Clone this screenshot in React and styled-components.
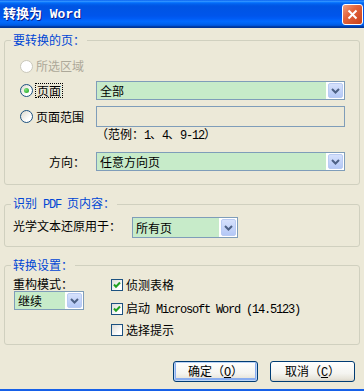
import React from 'react';
import styled, { createGlobalStyle } from 'styled-components';

const GlobalStyle = createGlobalStyle`
  body {
    margin: 0;
    font-family: "Noto Sans CJK SC", "Liberation Sans", sans-serif;
    font-size: 12px;
    color: #000;
  }
`

const Window = styled.div`
  width: 364px;
  height: 391px;
  display: flex;
  flex-direction: column;
  background: #ece9d8;
  overflow: hidden;
`

const TitleBar = styled.div`
  height: 28px;
  flex: none;
  display: flex;
  align-items: center;
  justify-content: space-between;
  padding: 0 1px 0 3px;
  background: linear-gradient(
    to bottom,
    #0058ee 0%, #3593ff 4%, #288eff 6%, #127dff 8%, #036ffc 10%,
    #0262ee 14%, #0057e5 20%, #0054e3 24%, #0055eb 56%, #005bf5 66%,
    #026afe 76%, #0062ef 86%, #0052d6 92%, #0040ab 94%, #003092 100%
  );
`

const Title = styled.div`
  color: #fff;
  font-weight: bold;
  font-size: 13px;
  line-height: 16px;
  text-shadow: 1px 1px 0 #0a1e8c;
`

const CloseButton = styled.div`
  width: 21px;
  height: 21px;
  box-sizing: border-box;
  border: 1px solid #fff;
  border-radius: 3px;
  background: linear-gradient(135deg, #f0a080 0%, #e3643c 40%, #c8401a 100%);
  display: flex;
  align-items: center;
  justify-content: center;
`

const Body = styled.div`
  flex: 1;
  display: flex;
  flex-direction: column;
  padding-top: 5px;
  border-bottom: 2px solid #1660e8;
`

const Group = styled.fieldset`
  margin: ${p => p.$top || 0}px 4px 0;
  padding: 0;
  border: 1px solid #d0d0bf;
  border-radius: 3px;
  min-width: 0;
`

const Legend = styled.legend`
  margin-left: 6px;
  padding: 0 2px;
  color: #0046d5;
  line-height: 14px;
  font-size: 12px;
`

const Mono = styled.span`
  font-family: "Liberation Mono", monospace;
  font-size: ${p => p.$size || 12}px;
  letter-spacing: ${p => p.$spacing ?? -1.2}px;
`

const PagesBody = styled.div`
  display: flex;
  flex-direction: column;
  padding: 9px 14px 13px 15px;
`

const Row = styled.div`
  display: flex;
  align-items: center;
  height: ${p => p.$h}px;
  margin-top: ${p => p.$top || 0}px;
`

const LeftCell = styled.div`
  width: 76px;
  flex: none;
  box-sizing: border-box;
  display: flex;
  align-items: center;
  justify-content: ${p => (p.$end ? 'flex-end' : 'flex-start')};
  padding-right: ${p => (p.$end ? 11 : 0)}px;
`

const RadioLabel = styled.label`
  display: flex;
  align-items: center;
  gap: 3px;
  line-height: 14px;
  color: ${p => (p.$disabled ? '#aca899' : '#000')};
`

const Radio = styled.span`
  width: 13px;
  height: 13px;
  box-sizing: border-box;
  border-radius: 50%;
  border: 1px solid ${p => (p.$disabled ? '#cac8bb' : '#1c5180')};
  background: ${p => (p.$disabled ? '#fff' : 'linear-gradient(135deg, #dcd9cd, #fff 70%)')};
  position: relative;

  &::after {
    content: '';
    display: ${p => (p.$checked ? 'block' : 'none')};
    position: absolute;
    left: 3px;
    top: 3px;
    width: 5px;
    height: 5px;
    border-radius: 50%;
    background: radial-gradient(circle at 35% 35%, #7ce37c, #1a9f1a);
  }
`

const FocusText = styled.span`
  outline: 1px dotted #000;
  padding: 0 1px;
  line-height: 13px;
`

const Select = styled.div`
  display: flex;
  width: ${p => p.$w}px;
  height: ${p => p.$h}px;
  box-sizing: border-box;
  border: 1px solid #7f9db9;
  background: #fff;
  margin-left: ${p => p.$left || 0}px;
`

const SelectValue = styled.div`
  flex: 1;
  display: flex;
  align-items: center;
  padding-left: 3px;
  background: #c7ebc9;
  line-height: 14px;
`

const DropButton = styled.div`
  width: 15px;
  flex: none;
  margin: 1px 1px 1px 2px;
  box-sizing: border-box;
  border: 1px solid #b9cbf3;
  border-radius: 2px;
  background: linear-gradient(to bottom, #d6e1fc, #b4c8f6);
  display: flex;
  align-items: center;
  justify-content: center;
`

const TextBox = styled.div`
  width: 249px;
  height: 21px;
  box-sizing: border-box;
  border: 1px solid #7f9db9;
`

const Hint = styled.div`
  margin-left: 76px;
  line-height: 13px;
`

const OcrRow = styled.div`
  display: flex;
  align-items: flex-start;
  padding: 5px 0 8px 8px;
`

const OcrLabel = styled.div`
  width: 119px;
  flex: none;
  margin-top: 2px;
  line-height: 14px;
`

const SettingsBody = styled.div`
  display: flex;
  padding: 0 0 6px 8px;
`

const LeftCol = styled.div`
  width: 98px;
  flex: none;
  display: flex;
  flex-direction: column;
  padding-top: 5px;
`

const ModeLabel = styled.div`
  line-height: 14px;
`

const RightCol = styled.div`
  display: flex;
  flex-direction: column;
`

const CheckRow = styled.label`
  display: flex;
  align-items: center;
  gap: 3px;
  height: 16px;
  line-height: 14px;
  margin-top: ${p => p.$top || 0}px;
`

const CheckBox = styled.span`
  width: 12px;
  height: 12px;
  box-sizing: border-box;
  border: 1px solid #1c5180;
  background: linear-gradient(135deg, #dcdcd7, #fff 75%);
  display: flex;
  align-items: center;
  justify-content: center;
`

const ButtonBar = styled.div`
  display: flex;
  justify-content: flex-end;
  gap: 12px;
  padding-right: 9px;
  margin-top: 16px;
`

const Button = styled.button`
  width: 85px;
  height: 21px;
  padding: 0;
  box-sizing: border-box;
  border: 1px solid #003c74;
  border-radius: 3px;
  background: linear-gradient(to bottom, #fff 0%, #f4f4f0 60%, #e6e3d8 90%, #d6d0c5 100%);
  box-shadow: ${p => (p.$default ? 'inset 0 0 0 1px #bcd4f6, inset 0 -1px 0 2px #89adf0' : 'none')};
  font-family: "Noto Sans CJK SC", sans-serif;
  font-size: 12px;
  line-height: 14px;
  color: #000;
`

const Chevron = () => (
  <svg width="9" height="6" viewBox="0 0 9 6">
    <path d="M1 1 L4.5 4.5 L8 1" fill="none" stroke="#4d6185" strokeWidth="2" />
  </svg>
)

const Check = () => (
  <svg width="8" height="8" viewBox="0 0 8 8">
    <path d="M1 3.5 L3 5.8 L7 1.5" fill="none" stroke="#21a121" strokeWidth="2" />
  </svg>
)

const Dropdown = ({ value, w, h, left }) => (
  <Select $w={w} $h={h} $left={left}>
    <SelectValue>{value}</SelectValue>
    <DropButton>
      <Chevron />
    </DropButton>
  </Select>
)

const App = () => {
  return (
    <>
      <GlobalStyle />
      <Window>
        <TitleBar>
          <Title>
            转换为<Mono $size={13} $spacing={0}> Word</Mono>
          </Title>
          <CloseButton>
            <svg width="11" height="11" viewBox="0 0 11 11">
              <path d="M1.5 1.5 L9.5 9.5 M9.5 1.5 L1.5 9.5" stroke="#fff" strokeWidth="2" />
            </svg>
          </CloseButton>
        </TitleBar>
        <Body>
          <Group>
            <Legend>要转换的页：</Legend>
            <PagesBody>
              <Row $h={20}>
                <RadioLabel $disabled>
                  <Radio $disabled />
                  所选区域
                </RadioLabel>
              </Row>
              <Row $h={19} $top={5}>
                <LeftCell>
                  <RadioLabel>
                    <Radio $checked />
                    <FocusText>页面</FocusText>
                  </RadioLabel>
                </LeftCell>
                <Dropdown value="全部" w={249} h={19} />
              </Row>
              <Row $h={21} $top={6}>
                <LeftCell>
                  <RadioLabel>
                    <Radio />
                    页面范围
                  </RadioLabel>
                </LeftCell>
                <TextBox />
              </Row>
              <Hint>
                （范例：<Mono>1</Mono>、<Mono>4</Mono>、<Mono>9-12</Mono>）
              </Hint>
              <Row $h={19} $top={9}>
                <LeftCell $end>方向：</LeftCell>
                <Dropdown value="任意方向页" w={249} h={19} />
              </Row>
            </PagesBody>
          </Group>

          <Group $top={11}>
            <Legend>
              识别<Mono> PDF </Mono>页内容：
            </Legend>
            <OcrRow>
              <OcrLabel>光学文本还原用于：</OcrLabel>
              <Dropdown value="所有页" w={106} h={21} />
            </OcrRow>
          </Group>

          <Group $top={11}>
            <Legend>转换设置：</Legend>
            <SettingsBody>
              <LeftCol>
                <ModeLabel>重构模式：</ModeLabel>
                <Dropdown value="继续" w={70} h={19} left={1} />
              </LeftCol>
              <RightCol>
                <CheckRow $top={5}>
                  <CheckBox>
                    <Check />
                  </CheckBox>
                  侦测表格
                </CheckRow>
                <CheckRow $top={8}>
                  <CheckBox>
                    <Check />
                  </CheckBox>
                  <span>
                    启动<Mono> Microsoft Word (14.5123)</Mono>
                  </span>
                </CheckRow>
                <CheckRow $top={5}>
                  <CheckBox />
                  选择提示
                </CheckRow>
              </RightCol>
            </SettingsBody>
          </Group>

          <ButtonBar>
            <Button $default>
              确定（<u><Mono $spacing={0}>O</Mono></u>）
            </Button>
            <Button>
              取消（<u><Mono $spacing={0}>C</Mono></u>）
            </Button>
          </ButtonBar>
        </Body>
      </Window>
    </>
  );
};

export default App;
